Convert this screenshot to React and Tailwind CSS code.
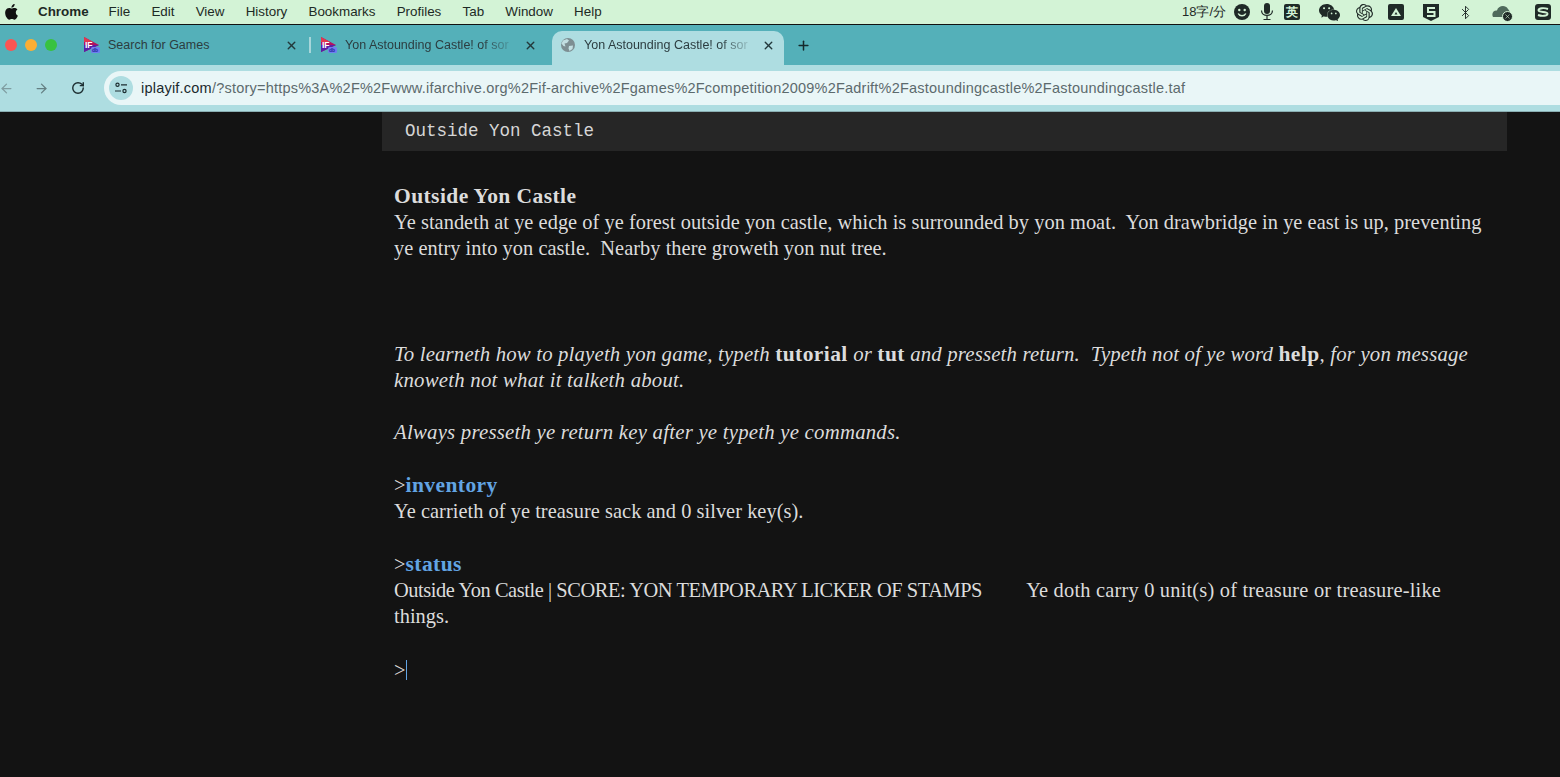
import React from 'react';
import { ArrowLeft, ArrowRight, RotateCw, Plus, X, Bluetooth } from 'lucide-react';
import { SiOpenai, SiWechat } from 'react-icons/si';

const menus = ['File', 'Edit', 'View', 'History', 'Bookmarks', 'Profiles', 'Tab', 'Window', 'Help'];

const AppleLogo = () => (
  <svg width="18" height="18" viewBox="0 0 24 24" fill="#111">
    <path d="M17.05 12.54c-.03-2.62 2.14-3.88 2.24-3.94-1.22-1.78-3.12-2.03-3.8-2.06-1.62-.16-3.16.95-3.98.95-.82 0-2.09-.93-3.43-.9-1.77.03-3.4 1.03-4.31 2.61-1.84 3.19-.47 7.91 1.32 10.5.88 1.27 1.92 2.69 3.29 2.64 1.32-.05 1.82-.85 3.41-.85 1.59 0 2.04.85 3.44.83 1.42-.03 2.32-1.29 3.19-2.57 1-1.47 1.42-2.9 1.44-2.97-.03-.01-2.77-1.06-2.81-4.24zM14.42 4.75c.73-.88 1.22-2.1 1.08-3.32-1.05.04-2.32.7-3.07 1.58-.67.78-1.26 2.02-1.1 3.22 1.17.09 2.36-.6 3.09-1.48z" />
  </svg>
);

const IfdbIcon = () => (
  <svg width="16" height="16" viewBox="0 0 16 16" className="shrink-0">
    <path d="M0 0 L15 8 L0 15 Z" fill="#b3125f" />
    <path d="M0 8 L15 8 L0 15 Z" fill="#5a1fa8" />
    <path d="M0 0 L9 5 L0 5 Z" fill="#e2374f" />
    <text x="1" y="11" fontSize="8.5" fontWeight="700" fill="#fff" fontFamily="Liberation Sans, sans-serif">IF</text>
    <rect x="7" y="10" width="9" height="6" rx="1.5" fill="#6f7df0" />
    <text x="8" y="15" fontSize="5" fontWeight="700" fill="#1c2a9a" fontFamily="Liberation Sans, sans-serif">db</text>
  </svg>
);

const GlobeIcon = () => (
  <svg width="16" height="16" viewBox="0 0 16 16" className="shrink-0">
    <circle cx="8" cy="8" r="7" fill="#7d8e92" />
    <path d="M3 3.5 L7 2 L9 3.5 L7 6 L4.5 6.5 L5.5 9.5 L3.5 9 L1.5 6.5 Z M9 9 L13 8.5 L12.5 12 L9.5 14 L8.5 11.5 Z" fill="#c3dfe2" />
  </svg>
);

const Tab = ({ title, icon, fade, className }) => (
  <div className={`flex items-center h-[34px] pb-[6px] rounded-t-[10px] ${className}`}>
    {icon}
    <span className={`ml-[8px] flex-1 overflow-hidden whitespace-nowrap text-[12.5px] text-[#2c3d40] ${fade}`}>
      {title}
    </span>
    <X size={13} strokeWidth={2.6} className="shrink-0 ml-[8px] text-[#22383b]" />
  </div>
);

const Box = ({ children, className = '' }) => (
  <div className={`flex items-center justify-center bg-[#1f2a27] text-[#d3f3d6] ${className}`}>{children}</div>
);

const StatusIcons = () => (
  <div className="flex items-center text-[#1f2a27]">
    <span className="text-[13px] mr-[8px]">18字/分</span>
    <svg width="16" height="16" viewBox="0 0 16 16" className="mr-[10px]">
      <circle cx="8" cy="8" r="8" fill="#1f2a27" />
      <circle cx="5.3" cy="6" r="1.2" fill="#d3f3d6" />
      <circle cx="10.7" cy="6" r="1.2" fill="#d3f3d6" />
      <path d="M4.2 9.5 C5.5 12.5 10.5 12.5 11.8 9.5" stroke="#d3f3d6" strokeWidth="1.4" fill="none" />
    </svg>
    <svg width="14" height="18" viewBox="0 0 14 18" className="mr-[10px]">
      <rect x="4" y="0" width="6" height="11" rx="3" fill="#1f2a27" />
      <path d="M1.5 7.5 C1.5 14 12.5 14 12.5 7.5 M7 12.5 V16 M3.5 16.5 H10.5" stroke="#1f2a27" strokeWidth="1.2" fill="none" />
    </svg>
    <Box className="w-[16px] h-[16px] rounded-[2px] text-[12px] font-bold leading-none mr-[19px]">英</Box>
    <SiWechat size={21} className="mr-[16px]" />
    <SiOpenai size={17} className="mr-[15px]" />
    <Box className="w-[16px] h-[16px] rounded-[2px] mr-[19px]">
      <svg width="12" height="10" viewBox="0 0 12 10">
        <path d="M6 1 L11 9 H1 Z" fill="#d3f3d6" />
        <path d="M6 5 L7.5 7.5 H4.5 Z" fill="#1f2a27" />
      </svg>
    </Box>
    <svg width="16" height="17" viewBox="0 0 16 17" className="mr-[19px]">
      <path d="M0 0 H16 V13 L8 17 L0 13 Z" fill="#1f2a27" />
      <path d="M12 4 H5 V8 H11.5 V12 H4" stroke="#d3f3d6" strokeWidth="2" fill="none" />
    </svg>
    <Bluetooth size={15} strokeWidth={1.5} className="mr-[19px]" />
    <div className="relative w-[19px] h-[14px] mr-[24px]">
      <svg width="18" height="13" viewBox="0 0 18 13">
        <path d="M1 12 C-1 8 2 5 5 5.5 C6 1 13 -1 16 4 C19 7 18 12 15 12 Z" fill="#4f6a5c" />
      </svg>
      <div className="absolute -right-[2px] -bottom-[3px] w-[11px] h-[11px] rounded-full bg-[#1f2a27] border border-[#d3f3d6] flex items-center justify-center">
        <X size={7} strokeWidth={2} className="text-[#d3f3d6]" />
      </div>
    </div>
    <Box className="w-[16px] h-[16px] rounded-[3px]">
      <svg width="12" height="10" viewBox="0 0 12 10">
        <path d="M11 2 C7 0.5 2 1 1.5 3 C1 5.5 11 4.5 10.5 7 C10 9 5 9.5 1 8" stroke="#d3f3d6" strokeWidth="1.9" fill="none" />
      </svg>
    </Box>
  </div>
);

const Line = ({ children, className = '' }) => (
  <div className={`h-[26.3px] ${className}`}>{children}</div>
);

const Strong = ({ children, className = '' }) => (
  <b className={`not-italic text-[21.5px] tracking-[0.42px] ${className}`}>{children}</b>
);

const App = () => {
  return (
    <div className="h-[777px] w-[1560px] overflow-hidden flex flex-col bg-[#131313] font-['Liberation_Sans',sans-serif]">
      {/* mac menu bar */}
      <div className="h-[25px] shrink-0 flex items-center justify-between bg-[#d3f3d6] border-b border-[#111] pl-[3px] pr-[9px] text-[13.4px] text-[#1d2a25]">
        <div className="flex items-center">
          <AppleLogo />
          <span className="font-bold ml-[17px] mr-[20px]">Chrome</span>
          <div className="flex gap-[21.2px]">
            {menus.map((m) => (
              <span key={m}>{m}</span>
            ))}
          </div>
        </div>
        <StatusIcons />
      </div>

      {/* tab strip */}
      <div className="h-[40px] shrink-0 flex items-end bg-[#54b0b9] pl-[5px]">
        <div className="flex items-center gap-[8px] self-center w-[70px]">
          <span className="w-[12px] h-[12px] rounded-full bg-[#fb5552]" />
          <span className="w-[12px] h-[12px] rounded-full bg-[#fcae33]" />
          <span className="w-[12px] h-[12px] rounded-full bg-[#38c23f]" />
        </div>
        <Tab icon={<IfdbIcon />} title="Search for Games" fade="" className="w-[237px] pl-[9px] pr-[14px]" />
        <div className="w-[2px] h-[16px] bg-[#a7d6da] self-center -ml-[3px]" />
        <Tab
          icon={<IfdbIcon />}
          title="Yon Astounding Castle! of sor"
          fade="[mask-image:linear-gradient(to_right,black_80%,transparent)]"
          className="w-[241px] pl-[10px] pr-[15px]"
        />
        <Tab
          icon={<GlobeIcon />}
          title="Yon Astounding Castle! of sor"
          fade="[mask-image:linear-gradient(to_right,black_80%,transparent)]"
          className="w-[232px] pl-[8px] pr-[9px] bg-[#aedde1]"
        />
        <Plus size={15} strokeWidth={2.4} className="self-center ml-[12px] text-[#15292c]" />
      </div>

      {/* toolbar */}
      <div className="h-[47px] shrink-0 flex items-center bg-[#aedde1] border-b border-[#8aaeb2]">
        <ArrowLeft size={15} strokeWidth={2} className="-ml-[1px] text-[#7f9da1]" />
        <ArrowRight size={15} strokeWidth={2} className="ml-[20px] text-[#647f83]" />
        <RotateCw size={14} strokeWidth={2.4} className="ml-[22px] text-[#1c2d30]" />
        <div className="ml-[19px] flex-1 -mr-[40px] h-[34px] rounded-full bg-[#e9f6f7] flex items-center pl-[5px]">
          <div className="w-[24px] h-[24px] rounded-full bg-[#aedde1] flex items-center justify-center">
            <svg width="14" height="12" viewBox="0 0 14 12" fill="none" stroke="#1c2d30" strokeWidth="1.2">
              <circle cx="3.5" cy="2.8" r="1.6" />
              <path d="M7 2.8 H13 M1 9 H7" />
              <circle cx="10.5" cy="9" r="1.6" />
            </svg>
          </div>
          <span className="ml-[8px] mt-[1px] text-[14.5px] tracking-[0.22px] whitespace-nowrap text-[#5c6a6d]">
            <span className="text-[#1b2a2d]">iplayif.com</span>
            /?story=https%3A%2F%2Fwww.ifarchive.org%2Fif-archive%2Fgames%2Fcompetition2009%2Fadrift%2Fastoundingcastle%2Fastoundingcastle.taf
          </span>
        </div>
      </div>

      {/* game page */}
      <div className="flex-1 ml-[382px] w-[1125px]">
        <div className="h-[39px] bg-[#262626] pl-[23px] flex items-center font-['Liberation_Mono',monospace] text-[17.5px] text-[#d6d6d6]">
          Outside Yon Castle
        </div>
        <div className="pl-[12px] pt-[31.9px] font-['Liberation_Serif',serif] text-[20.4px] tracking-[0.03px] leading-[26.3px] text-[#dcdcdc] whitespace-pre">
          <Line><Strong>Outside Yon Castle</Strong></Line>
          <Line>Ye standeth at ye edge of ye forest outside yon castle, which is surrounded by yon moat.  Yon drawbridge in ye east is up, preventing</Line>
          <Line>ye entry into yon castle.  Nearby there groweth yon nut tree.</Line>
          <div className="h-[78.9px]" />
          <Line className="italic text-[20.8px] tracking-[0.16px]">
            To learneth how to playeth yon game, typeth <Strong>tutorial</Strong> or <Strong>tut</Strong> and presseth return.  Typeth not of ye word <Strong>help</Strong>, for yon message
          </Line>
          <Line className="italic text-[20.8px] tracking-[0.22px]">knoweth not what it talketh about.</Line>
          <div className="h-[25.9px]" />
          <Line className="italic text-[20.8px] tracking-[0.22px]">Always presseth ye return key after ye typeth ye commands.</Line>
          <div className="h-[26.3px]" />
          <Line>&gt;<Strong className="text-[#62a4e3]">inventory</Strong></Line>
          <Line>Ye carrieth of ye treasure sack and 0 silver key(s).</Line>
          <div className="h-[26.3px]" />
          <Line>&gt;<Strong className="text-[#62a4e3]">status</Strong></Line>
          <Line>
            <span className="tracking-[-0.42px]">Outside Yon Castle | SCORE: YON TEMPORARY LICKER OF STAMPS</span>
            {'         '}
            <span className="-ml-[2px] tracking-[0.2px]">Ye doth carry 0 unit(s) of treasure or treasure-like</span>
          </Line>
          <Line>things.</Line>
          <div className="h-[26.3px]" />
          <div className="flex items-center h-[26.3px] mt-[1px]">
            &gt;<span className="w-px h-[20px] bg-[#62a4e3]" />
          </div>
        </div>
      </div>
    </div>
  );
};

export default App;
